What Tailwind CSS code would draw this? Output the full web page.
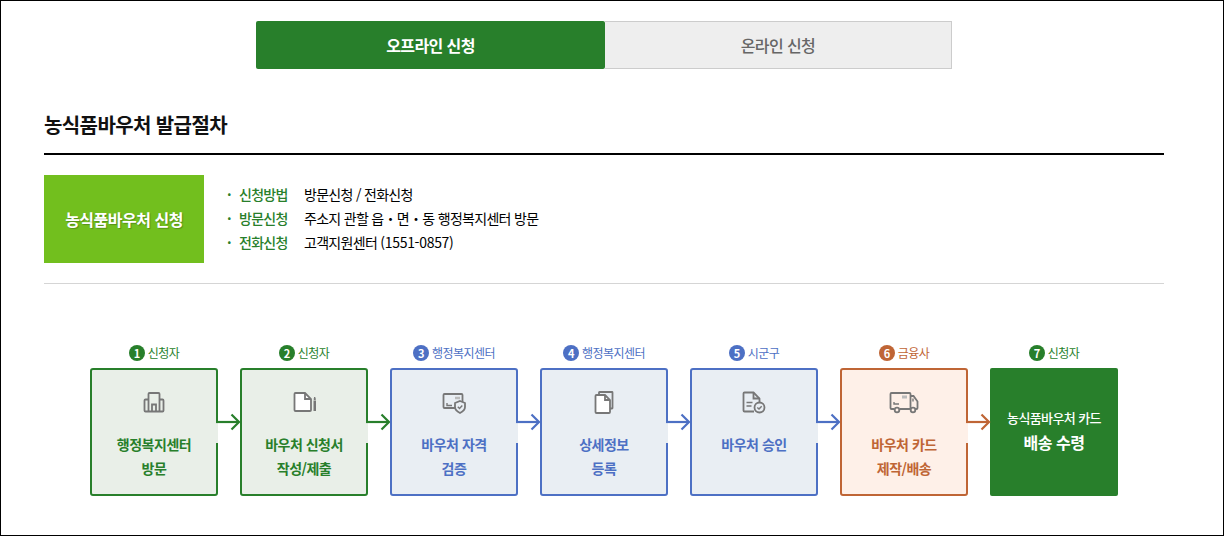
<!DOCTYPE html>
<html lang="ko">
<head>
    <meta charset="UTF-8">
    <title>농식품바우처 발급절차</title>
    <script src="https://cdn.jsdelivr.net/npm/@tailwindcss/browser@4"></script>
</head>
<body class="bg-white font-['Noto_Sans_CJK_KR',sans-serif]">
    <div class="w-[1224px] h-[536px] border border-black pl-[43px] pr-[59px] pt-[20px] overflow-hidden">
        <!-- Tabs -->
        <div class="flex w-[696px] h-[48px] ml-[212px]">
            <div class="w-[349px] bg-[#287f2b] rounded-[2px] flex items-center justify-center text-white text-[16px] font-bold tracking-[-0.6px]">오프라인 신청</div>
            <div class="flex-1 bg-[#eeeeee] border border-l-0 border-[#cccccc] flex items-center justify-center text-[#666666] text-[16px] font-medium tracking-[-0.6px]">온라인 신청</div>
        </div>

        <!-- Title -->
        <h2 class="mt-[41px] h-[43px] text-[20px] leading-[30px] font-bold text-[#111111] tracking-[-0.6px] border-b-2 border-black box-content">농식품바우처 발급절차</h2>

        <!-- Method -->
        <div class="mt-[20px] flex pb-[20px] border-b border-[#d5d5d5]">
            <div class="w-[160px] h-[88px] bg-[#72bf1e] flex items-center justify-center text-white text-[16px] font-bold tracking-[-0.5px] [text-shadow:1px_1px_1px_rgba(0,0,0,0.25)]">농식품바우처 신청</div>
            <ul class="ml-[23px] pt-[7px] text-[14px] leading-[24px] tracking-[-0.7px] text-black">
                <li class="flex"><span class="w-[12px] text-[#287f2b] font-bold">·</span><span class="w-[65px] text-[#287f2b] font-medium">신청방법</span>방문신청 / 전화신청</li>
                <li class="flex"><span class="w-[12px] text-[#287f2b] font-bold">·</span><span class="w-[65px] text-[#287f2b] font-medium">방문신청</span>주소지 관할 읍・면・동 행정복지센터 방문</li>
                <li class="flex"><span class="w-[12px] text-[#287f2b] font-bold">·</span><span class="w-[65px] text-[#287f2b] font-medium">전화신청</span><span>고객지원센터 <span class="tracking-[-0.3px]">(1551-0857)</span></span></li>
            </ul>
        </div>

        <!-- Steps -->
        <div class="mt-[60px] ml-[46px] flex gap-[22px]">
            <!-- 1 -->
            <div class="w-[128px]">
                <div class="h-[24px] pb-[6px] flex items-center justify-center gap-[3px] text-[12px] tracking-[-0.5px] text-[#287f2b]"><span class="w-[16px] h-[16px] rounded-full bg-[#287f2b] text-white text-[11px] font-bold flex items-center justify-center">1</span>신청자</div>
                <div class="relative h-[128px] border-2 border-[#287f2b] rounded-[3px] bg-[#e9efe8] flex flex-col items-center pt-[20px] text-[14px] leading-[24px] font-bold tracking-[-0.5px] text-[#287f2b]">
                    <svg class="w-[24px] h-[24px] mb-[18px]" viewBox="0 0 24 24" fill="none" stroke="#777777" stroke-width="1.800"><path d="M6.500 21.500V4q0-1 1-1h9q1 0 1 1v17.500"/><path d="M6.500 9.500H3.500q-1 0-1 1v10q0 1 1 1h17q1 0 1-1v-10q0-1-1-1h-3"/><path d="M10 21.500v-7h4v7"/></svg>
                    <span>행정복지센터</span><span>방문</span>
                    <div class="absolute left-[124px] top-[53px] w-[2px] h-[20px] bg-[#e9efe8]"></div>
                    <svg class="absolute left-[124px] top-[42px] w-[26px] h-[20px]" viewBox="0 0 26 20" fill="none" stroke="#287f2b" stroke-width="2.200"><path d="M0 10H22"/><path d="M15.500 2.500l7.500 7.500-7.500 7.500"/></svg>
                </div>
            </div>
            <!-- 2 -->
            <div class="w-[128px]">
                <div class="h-[24px] pb-[6px] flex items-center justify-center gap-[3px] text-[12px] tracking-[-0.5px] text-[#287f2b]"><span class="w-[16px] h-[16px] rounded-full bg-[#287f2b] text-white text-[11px] font-bold flex items-center justify-center">2</span>신청자</div>
                <div class="relative h-[128px] border-2 border-[#287f2b] rounded-[3px] bg-[#e9efe8] flex flex-col items-center pt-[20px] text-[14px] leading-[24px] font-bold tracking-[-0.5px] text-[#287f2b]">
                    <svg class="w-[24px] h-[24px] mb-[18px] translate-x-[1px]" viewBox="0 0 24 24" fill="none" stroke="#777777" stroke-width="1.800"><path d="M1.500 4q0-1 1-1h9.500l6 6v11q0 1-1 1H2.500q-1 0-1-1z" fill="#ffffff"/><path d="M12 3v6h6"/><path d="M20.500 10.500h2.500v10.500h-2.500z" fill="#777777" stroke="none"/><path d="M21 9.500l.7-2.500.7 2.500z" fill="#777777" stroke-width="1"/></svg>
                    <span>바우처 신청서</span><span>작성/제출</span>
                    <div class="absolute left-[124px] top-[53px] w-[2px] h-[20px] bg-[#e9efe8]"></div>
                    <svg class="absolute left-[124px] top-[42px] w-[26px] h-[20px]" viewBox="0 0 26 20" fill="none" stroke="#287f2b" stroke-width="2.200"><path d="M0 10H22"/><path d="M15.500 2.500l7.500 7.500-7.500 7.500"/></svg>
                </div>
            </div>
            <!-- 3 -->
            <div class="w-[128px]">
                <div class="h-[24px] pb-[6px] flex items-center justify-center gap-[3px] text-[12px] tracking-[-0.5px] text-[#4d70c4]"><span class="w-[16px] h-[16px] rounded-full bg-[#4d70c4] text-white text-[11px] font-bold flex items-center justify-center">3</span>행정복지센터</div>
                <div class="relative h-[128px] border-2 border-[#4d70c4] rounded-[3px] bg-[#e9eef3] flex flex-col items-center pt-[20px] text-[14px] leading-[24px] font-bold tracking-[-0.5px] text-[#4d70c4]">
                    <svg class="w-[24px] h-[24px] mb-[18px]" viewBox="0 0 24 24" fill="none" stroke="#777777" stroke-width="1.800"><path d="M14 18H2.500q-1 0-1-1V5q0-1 1-1h17q1 0 1 1v7"/><path d="M5 13v2.500h5" stroke-width="1.400"/><path d="M13 8h5" stroke="#bbbbbb" stroke-width="2.500"/><path d="M18 11l5 2v4q0 3.500-5 6-5-2.500-5-6v-4z" fill="#e9eef3"/><path d="M15.800 16.800l1.700 1.600 2.800-2.800" stroke-width="1.400"/></svg>
                    <span>바우처 자격</span><span>검증</span>
                    <div class="absolute left-[124px] top-[53px] w-[2px] h-[20px] bg-[#e9eef3]"></div>
                    <svg class="absolute left-[124px] top-[42px] w-[26px] h-[20px]" viewBox="0 0 26 20" fill="none" stroke="#4d70c4" stroke-width="2.200"><path d="M0 10H22"/><path d="M15.500 2.500l7.500 7.500-7.500 7.500"/></svg>
                </div>
            </div>
            <!-- 4 -->
            <div class="w-[128px]">
                <div class="h-[24px] pb-[6px] flex items-center justify-center gap-[3px] text-[12px] tracking-[-0.5px] text-[#4d70c4]"><span class="w-[16px] h-[16px] rounded-full bg-[#4d70c4] text-white text-[11px] font-bold flex items-center justify-center">4</span>행정복지센터</div>
                <div class="relative h-[128px] border-2 border-[#4d70c4] rounded-[3px] bg-[#e9eef3] flex flex-col items-center pt-[20px] text-[14px] leading-[24px] font-bold tracking-[-0.5px] text-[#4d70c4]">
                    <svg class="w-[24px] h-[24px] mb-[18px]" viewBox="0 0 24 24" fill="none" stroke="#777777" stroke-width="1.800"><path d="M7 4V2.500q0-.5.500-.5H20q.5 0 .5.500V18q0 .5-.5.500h-2"/><path d="M3.500 6q0-1 1-1h8.500l5 5v12q0 1-1 1H4.500q-1 0-1-1z" fill="#ffffff"/><path d="M13 5v5h5"/></svg>
                    <span>상세정보</span><span>등록</span>
                    <div class="absolute left-[124px] top-[53px] w-[2px] h-[20px] bg-[#e9eef3]"></div>
                    <svg class="absolute left-[124px] top-[42px] w-[26px] h-[20px]" viewBox="0 0 26 20" fill="none" stroke="#4d70c4" stroke-width="2.200"><path d="M0 10H22"/><path d="M15.500 2.500l7.500 7.500-7.500 7.500"/></svg>
                </div>
            </div>
            <!-- 5 -->
            <div class="w-[128px]">
                <div class="h-[24px] pb-[6px] flex items-center justify-center gap-[3px] text-[12px] tracking-[-0.5px] text-[#4d70c4]"><span class="w-[16px] h-[16px] rounded-full bg-[#4d70c4] text-white text-[11px] font-bold flex items-center justify-center">5</span>시군구</div>
                <div class="relative h-[128px] border-2 border-[#4d70c4] rounded-[3px] bg-[#e9eef3] flex flex-col items-center pt-[20px] text-[14px] leading-[24px] font-bold tracking-[-0.5px] text-[#4d70c4]">
                    <svg class="w-[24px] h-[24px] mb-[18px]" viewBox="0 0 24 24" fill="none" stroke="#777777" stroke-width="1.800"><path d="M12 21.500H2.500q-1 0-1-1v-17q0-1 1-1h9l6 6v4"/><path d="M11.500 2.500v6h6"/><path d="M4.500 12.500h6M4.500 16h5" stroke-width="1.400"/><circle cx="17.500" cy="17.500" r="5"/><path d="M15.300 17.500l1.700 1.600 2.700-2.900" stroke-width="1.400"/></svg>
                    <span>바우처 승인</span>
                    <div class="absolute left-[124px] top-[53px] w-[2px] h-[20px] bg-[#e9eef3]"></div>
                    <svg class="absolute left-[124px] top-[42px] w-[26px] h-[20px]" viewBox="0 0 26 20" fill="none" stroke="#4d70c4" stroke-width="2.200"><path d="M0 10H22"/><path d="M15.500 2.500l7.500 7.500-7.500 7.500"/></svg>
                </div>
            </div>
            <!-- 6 -->
            <div class="w-[128px]">
                <div class="h-[24px] pb-[6px] flex items-center justify-center gap-[3px] text-[12px] tracking-[-0.5px] text-[#bf6535]"><span class="w-[16px] h-[16px] rounded-full bg-[#bf6535] text-white text-[11px] font-bold flex items-center justify-center">6</span>금융사</div>
                <div class="relative h-[128px] border-2 border-[#bf6535] rounded-[3px] bg-[#fef0e8] flex flex-col items-center pt-[20px] text-[14px] leading-[24px] font-bold tracking-[-0.5px] text-[#bf6535]">
                    <svg class="w-[30px] h-[24px] mb-[18px]" viewBox="0 0 30 24" fill="none" stroke="#777777" stroke-width="1.800"><path d="M5 19H2.500q-1 0-1-1V4q0-1 1-1h18q1 0 1 1v14q0 1-1 1H11"/><path d="M21.500 6h3l4 5.500V18q0 1-1 1h-1M21.500 19h.5"/><circle cx="8" cy="20" r="2.300"/><circle cx="24" cy="20" r="2.300"/><path d="M5 12v2h5" stroke-width="1.400"/><path d="M13 7h5" stroke="#bbbbbb" stroke-width="3"/><path d="M24 8.500v3" stroke-width="1.400"/></svg>
                    <span>바우처 카드</span><span>제작/배송</span>
                    <div class="absolute left-[124px] top-[53px] w-[2px] h-[20px] bg-[#fef0e8]"></div>
                    <svg class="absolute left-[124px] top-[42px] w-[26px] h-[20px]" viewBox="0 0 26 20" fill="none" stroke="#bf6535" stroke-width="2.200"><path d="M0 10H22"/><path d="M15.500 2.500l7.500 7.500-7.500 7.500"/></svg>
                </div>
            </div>
            <!-- 7 -->
            <div class="w-[128px]">
                <div class="h-[24px] pb-[6px] flex items-center justify-center gap-[3px] text-[12px] tracking-[-0.5px] text-[#287f2b]"><span class="w-[16px] h-[16px] rounded-full bg-[#287f2b] text-white text-[11px] font-bold flex items-center justify-center">7</span>신청자</div>
                <div class="h-[128px] rounded-[2px] bg-[#287f2b] flex flex-col items-center justify-center text-white font-bold pb-[4px]">
                    <span class="text-[13px] leading-[24px] font-medium tracking-[-0.6px]">농식품바우처 카드</span>
                    <span class="text-[16px] leading-[24px] tracking-[-0.5px]">배송 수령</span>
                </div>
            </div>
        </div>
    </div>
</body>
</html>
